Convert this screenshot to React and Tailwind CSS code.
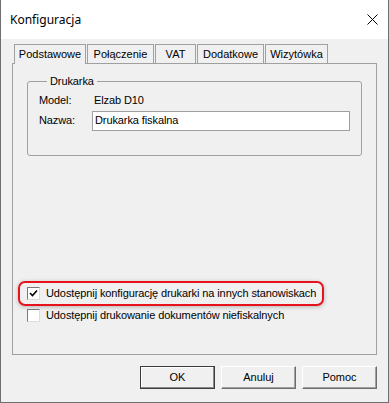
import React from "react";

const tabs = [
    { label: "Podstawowe", w: "w-[72px]", active: true },
    { label: "Połączenie", w: "w-[67px]" },
    { label: "VAT", w: "w-[41px]" },
    { label: "Dodatkowe", w: "w-[67px]" },
    { label: "Wizytówka", w: "w-[63px]" },
];

function Checkbox({ checked }) {
    return (
        <span className="w-[13px] h-[13px] bg-white border border-t-[#7a7a7a] border-l-[#7a7a7a] border-r-[#dcdcdc] border-b-[#dcdcdc] flex items-center justify-center shrink-0">
            {checked && (
                <svg width="9" height="9" viewBox="0 0 9 9">
                    <path d="M1 4 L3.5 6.5 L8 1.5" fill="none" stroke="#000" strokeWidth="1.6" />
                </svg>
            )}
        </span>
    );
}

function Button({ children, primary }) {
    return (
        <button
            className={
                primary
                    ? "w-[75px] h-[23px] bg-[#f0f0f0] border border-[#3c3c3c] shadow-[inset_-1px_-1px_0_#8a8a8a,inset_1px_1px_0_#ffffff] text-[11px] text-black"
                    : "w-[75px] h-[23px] bg-[#f0f0f0] border border-t-white border-l-white border-r-[#6e6e6e] border-b-[#6e6e6e] shadow-[inset_-1px_-1px_0_#a0a0a0] text-[11px] text-black"
            }
        >
            {children}
        </button>
    );
}

export default function App() {
    return (
        <div className="w-[389px] h-[403px] flex flex-col bg-[#f0f0f0] border-x border-b border-[#6f6f6f] font-['Liberation_Sans',Arial,sans-serif] text-black">
            {/* Title bar */}
            <div className="h-[39px] bg-white flex items-center justify-between pl-[9px] pr-[10px] shrink-0">
                <span className="text-[12px] font-['Noto_Sans',sans-serif] text-[#000]">Konfiguracja</span>
                <svg width="11" height="11" viewBox="0 0 11 11">
                    <path d="M0.5 0.5 L10.5 10.5 M10.5 0.5 L0.5 10.5" stroke="#000" strokeWidth="1" />
                </svg>
            </div>

            {/* Body */}
            <div className="flex-1 flex flex-col px-[11px] pt-[5px] pb-[12px]">
                {/* Tabs */}
                <div className="flex gap-[1px] pl-[2px] text-[11px]">
                    {tabs.map((t) => (
                        <div
                            key={t.label}
                            className={
                                t.active
                                    ? t.w + " h-[20px] -mb-px relative z-10 bg-[#f0f0f0] border border-b-0 border-[#a0a0a0] flex items-center justify-center"
                                    : t.w + " h-[19px] border border-b-0 border-[#a0a0a0] flex items-center justify-center"
                            }
                        >
                            {t.label}
                        </div>
                    ))}
                </div>

                {/* Panel */}
                <div className="h-[292px] border border-[#a0a0a0] flex flex-col text-[11px] tracking-[-0.1px]">
                    <fieldset className="mt-[9px] mx-[14px] border border-[#a0a0a0] rounded-[3px] pl-[11px] pr-[11px] pb-[24px]">
                        <legend className="ml-[8px] px-[3px]">Drukarka</legend>
                        <div className="flex items-center h-[20px] mt-[1px]">
                            <span className="w-[55px]">Model:</span>
                            <span>Elzab D10</span>
                        </div>
                        <div className="flex items-center h-[20px]">
                            <span className="w-[53px]">Nazwa:</span>
                            <div className="flex-1 h-[20px] bg-white border border-[#a0a0a0] flex items-center pl-[2px]">
                                Drukarka fiskalna
                            </div>
                        </div>
                    </fieldset>

                    <div className="flex-1" />

                    <div className="ml-[5px] w-[306px] h-[25px] border-2 border-[#e8121c] rounded-[7px] shadow-[0_1px_4px_rgba(0,0,0,0.25)] flex items-center pl-[7px] gap-[6px]">
                        <Checkbox checked />
                        <span>Udostępnij konfigurację drukarki na innych stanowiskach</span>
                    </div>
                    <div className="ml-[14px] mt-[2px] h-[14px] flex items-center gap-[6px] mb-[32px]">
                        <Checkbox />
                        <span>Udostępnij drukowanie dokumentów niefiskalnych</span>
                    </div>
                </div>

                {/* Buttons */}
                <div className="mt-[11px] flex justify-end gap-[6px]">
                    <Button primary>OK</Button>
                    <Button>Anuluj</Button>
                    <Button>Pomoc</Button>
                </div>
            </div>
        </div>
    );
}
